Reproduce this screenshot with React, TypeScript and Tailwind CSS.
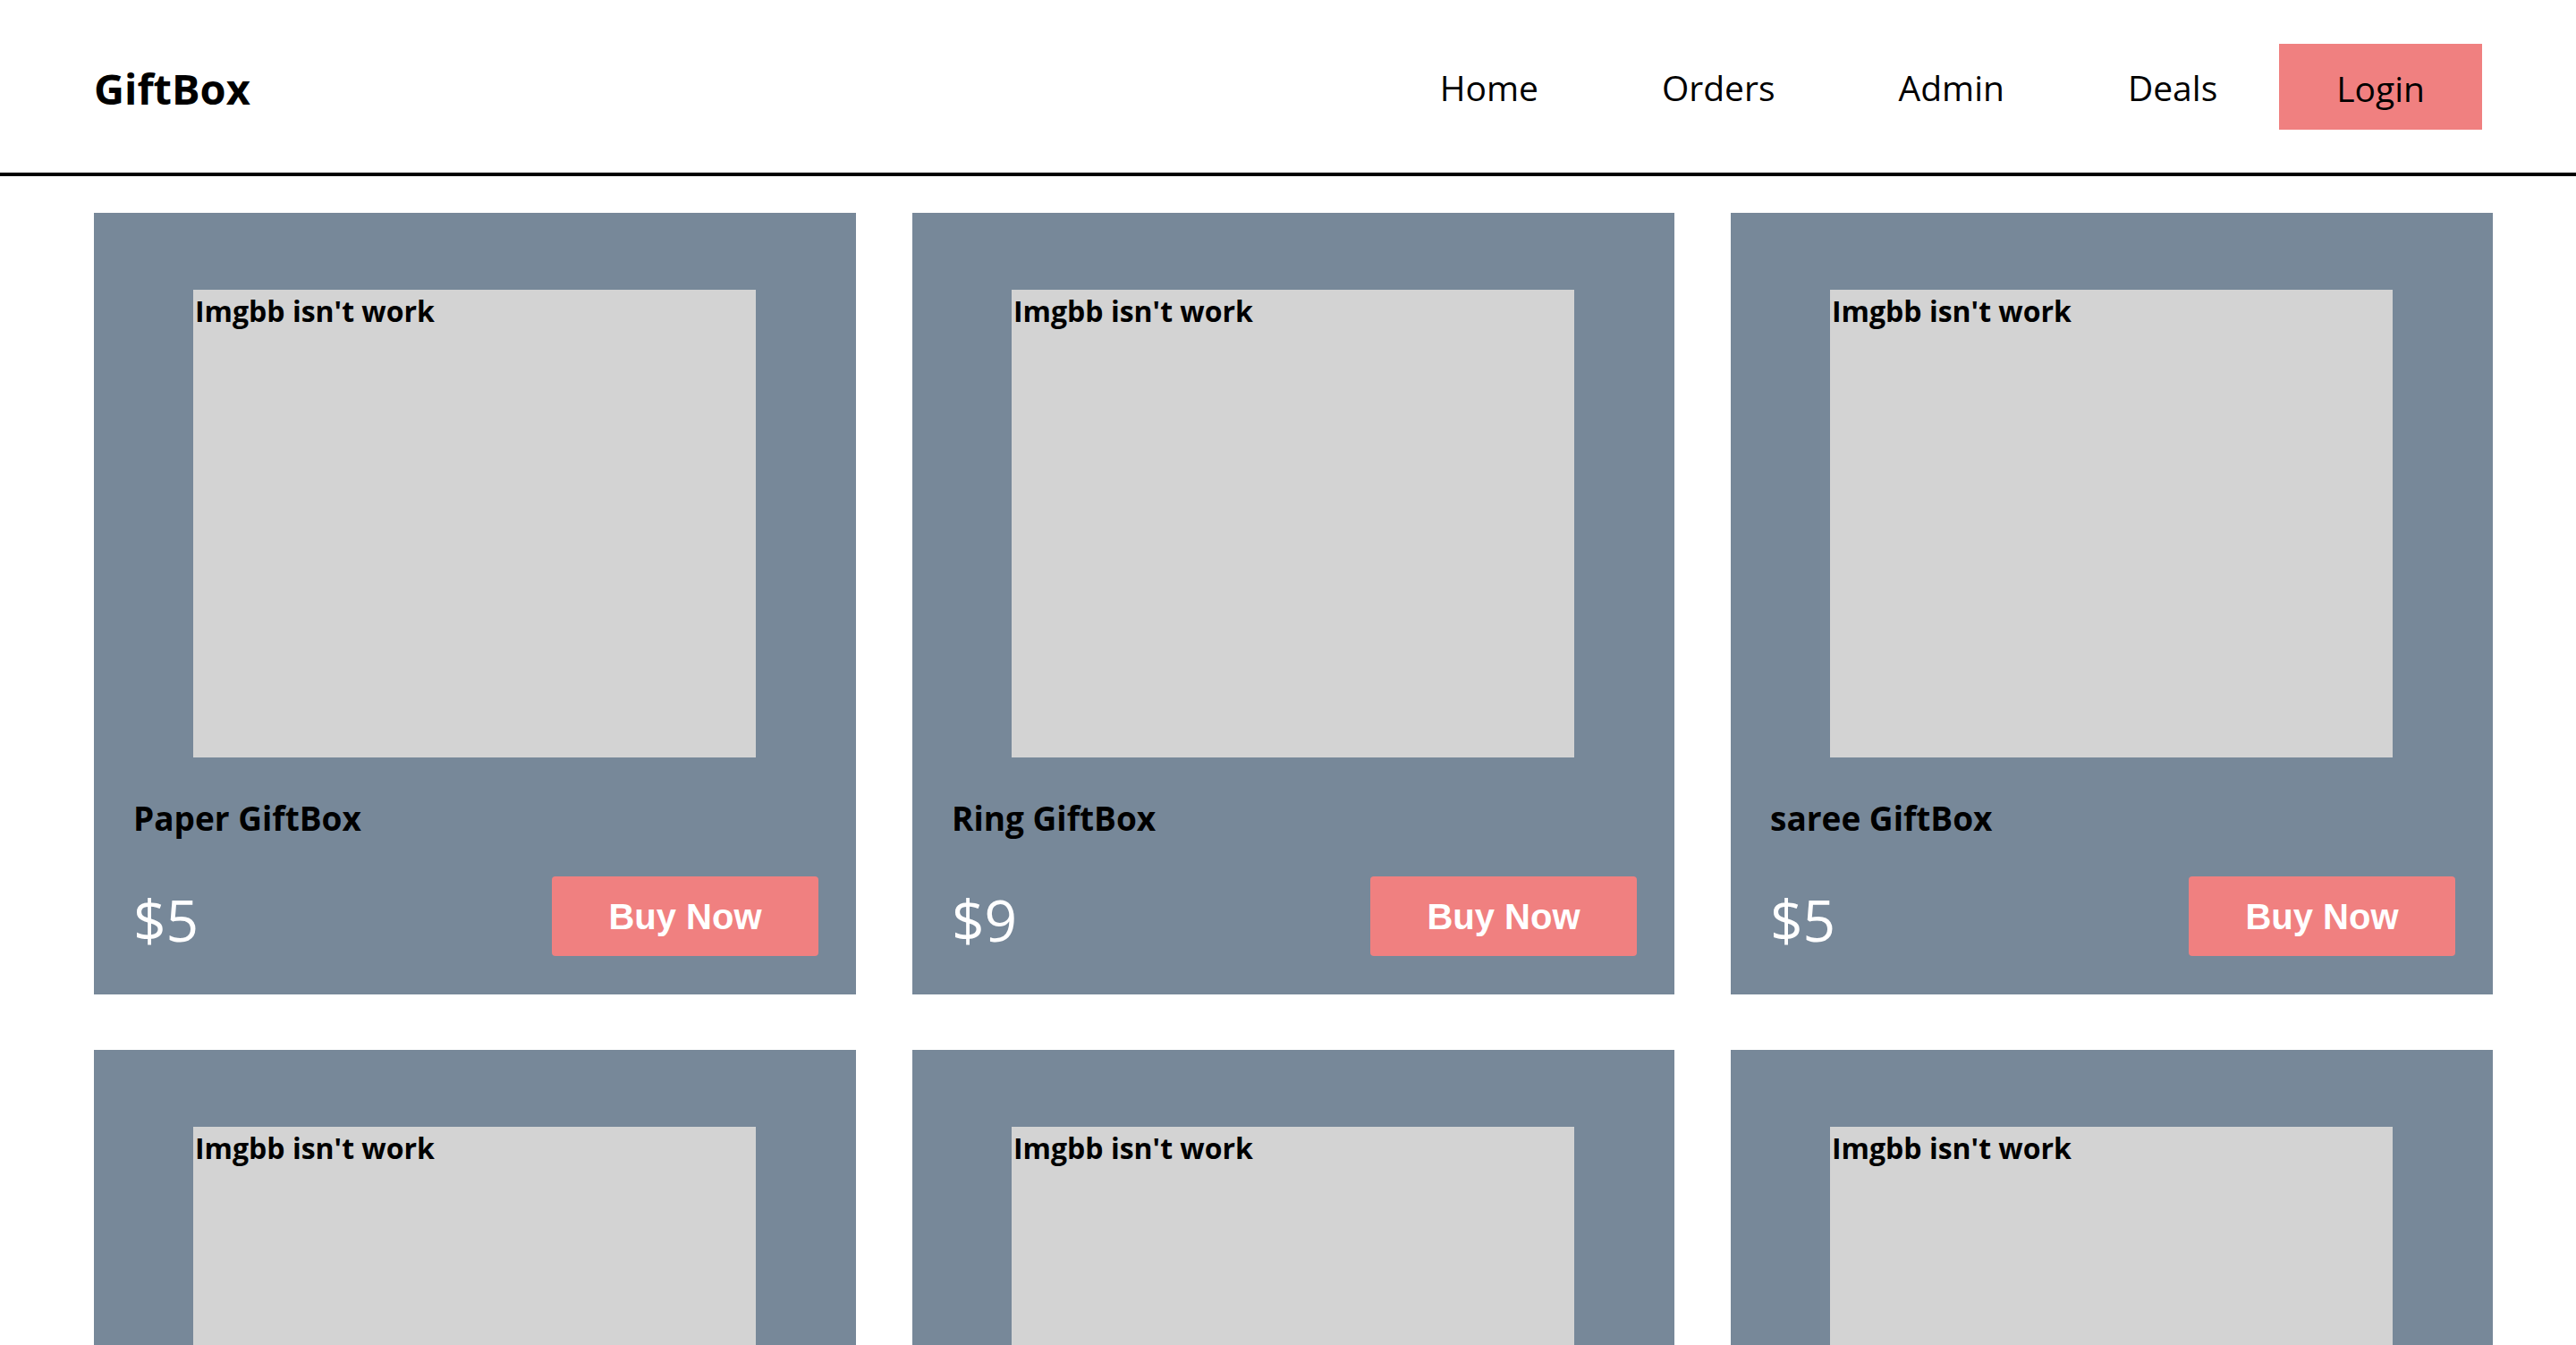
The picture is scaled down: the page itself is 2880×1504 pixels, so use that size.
type Product = {
  id: number;
  name: string;
  price: number;
};

const products: Product[] = [
  { id: 1, name: 'Paper GiftBox', price: 5 },
  { id: 2, name: 'Ring GiftBox', price: 9 },
  { id: 3, name: 'saree GiftBox', price: 5 },
  { id: 4, name: 'Watch GiftBox', price: 12 },
  { id: 5, name: 'Flower GiftBox', price: 7 },
  { id: 6, name: 'Toy GiftBox', price: 6 },
];

const navLinks = ['Home', 'Orders', 'Admin', 'Deals'];

function ProductCard({ product }: { product: Product }) {
  return (
    <div className="bg-[#778899] pt-[86px] pb-[43px] pl-[44px] pr-[42px]">
      {/* broken image placeholder */}
      <div className="ml-[67px] w-[629px] h-[523px] bg-[#d3d3d3]">
        <span className="block pl-[2px] pt-[2px] text-[32px] leading-[44px] font-bold text-black">
          Imgbb isn't work
        </span>
      </div>
      <h3 className="mt-[43px] text-[37px] leading-[50px] font-bold text-black">{product.name}</h3>
      <div className="mt-[40px] flex items-center justify-between">
        <span className="pt-[8px] text-[64px] leading-[64px] text-white">${product.price}</span>
        <button className="w-[298px] h-[89px] rounded-[4px] bg-[#f08080] text-white text-[40px] font-bold font-['Liberation_Sans',Arial,sans-serif]">
          Buy Now
        </button>
      </div>
    </div>
  );
}

export default function App() {
  return (
    <div className="min-h-screen bg-white font-['Open_Sans','Noto_Sans',sans-serif] text-black">
      {/* Header */}
      <header className="h-[197px] border-b-4 border-black px-[105px] flex items-center justify-between">
        <div className="text-[47px] font-bold leading-[64px] pt-[4px]">GiftBox</div>
        <nav className="flex items-center">
          {navLinks.map((link) => (
            <a key={link} href="#" className="px-[69px] text-[39px] leading-[96px] pt-[2px]">
              {link}
            </a>
          ))}
          <a href="#" className="px-[64px] h-[96px] bg-[#f08080] text-[39px] leading-[96px] pt-[2px]">
            Login
          </a>
        </nav>
      </header>

      {/* Products */}
      <main className="pt-[41px] px-[105px] pb-[60px]">
        <div className="grid grid-cols-[repeat(3,852px)] gap-x-[63px] gap-y-[62px]">
          {products.map((p) => (
            <ProductCard key={p.id} product={p} />
          ))}
        </div>
      </main>
    </div>
  );
}
